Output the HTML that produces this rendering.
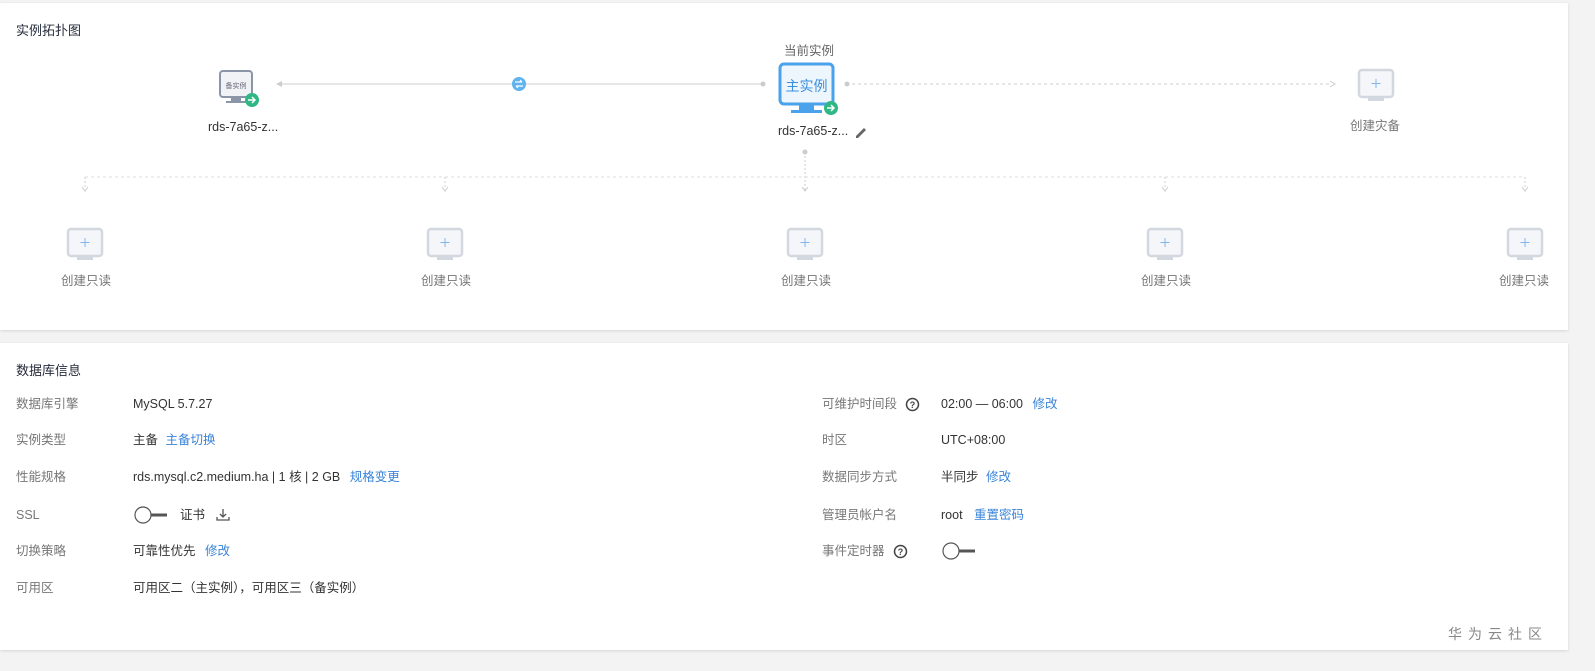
<!DOCTYPE html>
<html><head><meta charset="utf-8"><style>
*{margin:0;padding:0;box-sizing:border-box}
body{width:1595px;height:671px;background:#f3f3f3;font-family:"Liberation Sans","Noto Sans CJK SC",sans-serif;font-size:12.5px;color:#333;position:relative;overflow:hidden}
.card{position:absolute;left:0;width:1568px;background:#fff;box-shadow:0 1px 3px rgba(0,0,0,.12)}
.a{position:absolute;white-space:nowrap;line-height:16px;height:16px}
.a span{vertical-align:top}
.t{font-size:13px;color:#252b3a}
.l{color:#777}
.lk{color:#3a84d8}
.g{color:#777;font-size:12.5px}
</style></head><body>
<div class="card" style="top:3px;height:327px"></div>
<div class="card" style="top:343px;height:307px"></div>

<div class="a t" style="left:16px;top:23px">实例拓扑图</div>
<div class="a g" style="left:784px;top:43px;color:#666">当前实例</div>

<svg class="a" style="left:0;top:0;height:330px" width="1595" height="330">
 <line x1="280" y1="84" x2="765" y2="84" stroke="#ddd" stroke-width="1.5"/>
 <polygon points="276,84 282,81 282,87" fill="#ccc"/>
 <circle cx="763" cy="84" r="2.5" fill="#ccc"/>
 <circle cx="519" cy="84" r="7" fill="#5eb3f0"/>
 <path d="M515 82h7M522 82l-2-2M523 86h-7M516 86l2 2" stroke="#fff" stroke-width="1.2" fill="none"/>
 <circle cx="847" cy="84" r="2.5" fill="#ccc"/>
 <line x1="852" y1="84" x2="1332" y2="84" stroke="#ccc" stroke-dasharray="3,3"/>
 <polyline points="1330,81 1335,84 1330,87" stroke="#ccc" fill="none"/>
 <circle cx="805" cy="152" r="2.5" fill="#ccc"/>
 <line x1="805" y1="156" x2="805" y2="190" stroke="#ccc" stroke-dasharray="2,2"/>
 <line x1="85" y1="177" x2="1525" y2="177" stroke="#ddd" stroke-dasharray="3,3"/>
 <g stroke="#ccc" fill="none" stroke-dasharray="2,2">
  <line x1="85" y1="177" x2="85" y2="189"/><line x1="445" y1="177" x2="445" y2="189"/><line x1="1165" y1="177" x2="1165" y2="189"/><line x1="1525" y1="177" x2="1525" y2="189"/>
 </g>
 <g stroke="#ccc" fill="none">
  <polyline points="82,187 85,191 88,187"/><polyline points="442,187 445,191 448,187"/><polyline points="802,187 805,191 808,187"/><polyline points="1162,187 1165,191 1168,187"/><polyline points="1522,187 1525,191 1528,187"/>
 </g>
 <rect x="220" y="71" width="32" height="26" rx="3" fill="#f0f2f5" stroke="#8a96a8" stroke-width="2"/>
 <text x="236" y="88" font-size="7" fill="#667" text-anchor="middle" font-family="Noto Sans CJK SC">备实例</text>
 <rect x="231" y="97" width="10" height="4" fill="#8a96a8"/><rect x="226" y="101" width="20" height="2" fill="#8a96a8"/>
 <circle cx="252" cy="100" r="7" fill="#2fb885"/>
 <path d="M248 100h7M252 97l3 3-3 3" stroke="#fff" stroke-width="1.5" fill="none"/>
 <rect x="780" y="64" width="53" height="40" rx="4" fill="#eef6fd" stroke="#4aa2ec" stroke-width="3"/>
 <text x="806.5" y="91" font-size="14" fill="#3a8ee0" text-anchor="middle" font-family="Noto Sans CJK SC">主实例</text>
 <rect x="799" y="104" width="15" height="6" fill="#4aa2ec"/><rect x="791" y="110" width="31" height="3" fill="#4aa2ec"/>
 <circle cx="831" cy="108" r="7" fill="#2fb885"/>
 <path d="M827 108h7M831 105l3 3-3 3" stroke="#fff" stroke-width="1.5" fill="none"/>
 <path d="M856 136l8-8 2 2-8 8h-2z" fill="#666"/>
 <defs><g id="m"><rect x="-17" y="-16" width="34" height="27" rx="3" fill="#f4f6f9" stroke="#d3d8e0" stroke-width="2.5"/><rect x="-8" y="12" width="16" height="3" fill="#d3d8e0"/><path d="M0 -7v9M-4.5 -2.5h9" stroke="#7fb6ec" stroke-width="1"/></g></defs>
 <use href="#m" x="1376" y="86"/>
 <use href="#m" x="85" y="245"/><use href="#m" x="445" y="245"/><use href="#m" x="805" y="245"/><use href="#m" x="1165" y="245"/><use href="#m" x="1525" y="245"/>
</svg>
<div class="a" style="left:208px;top:119px">rds-7a65-z...</div>
<div class="a" style="left:778px;top:123px">rds-7a65-z...</div>
<div class="a g" style="left:1350px;top:118px">创建灾备</div>
<div class="a g" style="left:61px;top:273px">创建只读</div>
<div class="a g" style="left:421px;top:273px">创建只读</div>
<div class="a g" style="left:781px;top:273px">创建只读</div>
<div class="a g" style="left:1141px;top:273px">创建只读</div>
<div class="a g" style="left:1499px;top:273px">创建只读</div>

<div class="a t" style="left:16px;top:363px">数据库信息</div>
<div class="a l" style="left:16px;top:396px">数据库引擎</div><div class="a" style="left:133px;top:396px">MySQL 5.7.27</div>
<div class="a l" style="left:16px;top:432px">实例类型</div><div class="a" style="left:133px;top:432px"><span>主备</span> <span class="lk" style="margin-left:4px">主备切换</span></div>
<div class="a l" style="left:16px;top:469px">性能规格</div><div class="a" style="left:133px;top:469px"><span>rds.mysql.c2.medium.ha | 1 核 | 2 GB</span> <span class="lk" style="margin-left:6px">规格变更</span></div>
<div class="a l" style="left:16px;top:507px">SSL</div>
<svg class="a" style="left:133px;top:505px;height:20px" width="36" height="20"><line x1="14" y1="10" x2="34" y2="10" stroke="#555" stroke-width="3"/><circle cx="10" cy="10" r="8" fill="#fff" stroke="#555" stroke-width="1.2"/></svg>
<div class="a" style="left:180px;top:507px">证书</div>
<svg class="a" style="left:216px;top:508px;height:14px" width="14" height="14"><path d="M7 1v8M4 6l3 3 3-3M1 9v3h12V9" stroke="#555" stroke-width="1.3" fill="none"/></svg>
<div class="a l" style="left:16px;top:543px">切换策略</div><div class="a" style="left:133px;top:543px"><span>可靠性优先</span> <span class="lk" style="margin-left:6px">修改</span></div>
<div class="a l" style="left:16px;top:580px">可用区</div><div class="a" style="left:133px;top:580px">可用区二（主实例），可用区三（备实例）</div>

<div class="a l" style="left:822px;top:396px">可维护时间段</div>
<svg class="a" style="left:905px;top:397px;height:15px" width="15" height="15"><circle cx="7.5" cy="7.5" r="6" fill="none" stroke="#444" stroke-width="1.5"/><text x="7.5" y="11" font-size="9" font-weight="bold" text-anchor="middle" fill="#444">?</text></svg>
<div class="a" style="left:941px;top:396px"><span>02:00 — 06:00</span> <span class="lk" style="margin-left:6px">修改</span></div>
<div class="a l" style="left:822px;top:432px">时区</div><div class="a" style="left:941px;top:432px">UTC+08:00</div>
<div class="a l" style="left:822px;top:469px">数据同步方式</div><div class="a" style="left:941px;top:469px"><span>半同步</span> <span class="lk" style="margin-left:4px">修改</span></div>
<div class="a l" style="left:822px;top:507px">管理员帐户名</div><div class="a" style="left:941px;top:507px"><span>root</span> <span class="lk" style="margin-left:8px">重置密码</span></div>
<div class="a l" style="left:822px;top:543px">事件定时器</div>
<svg class="a" style="left:893px;top:544px;height:15px" width="15" height="15"><circle cx="7.5" cy="7.5" r="6" fill="none" stroke="#444" stroke-width="1.5"/><text x="7.5" y="11" font-size="9" font-weight="bold" text-anchor="middle" fill="#444">?</text></svg>
<svg class="a" style="left:941px;top:541px;height:20px" width="36" height="20"><line x1="14" y1="10" x2="34" y2="10" stroke="#555" stroke-width="3"/><circle cx="10" cy="10" r="8" fill="#fff" stroke="#555" stroke-width="1.2"/></svg>

<div class="a" style="left:1448px;top:626px;font-size:14px;color:#888;letter-spacing:6px">华为云社区</div>
</body></html>
